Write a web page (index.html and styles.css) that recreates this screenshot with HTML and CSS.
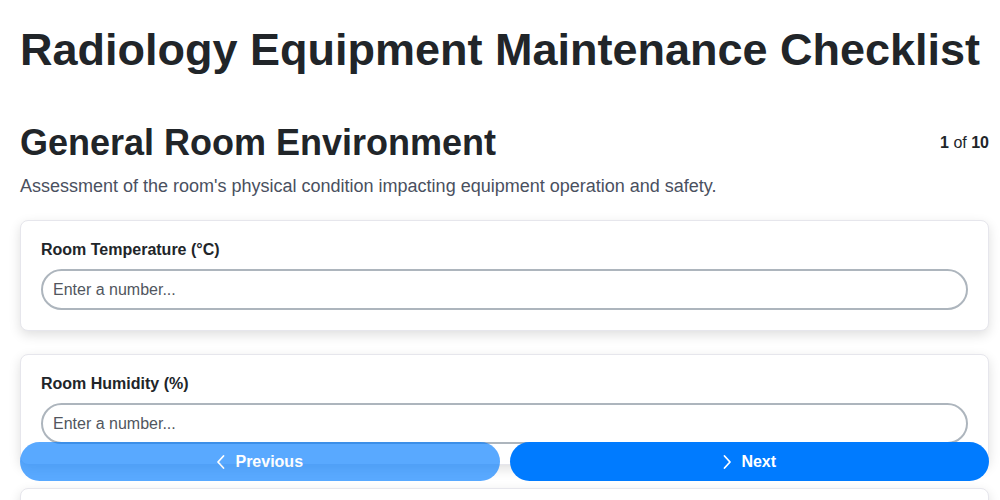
FILE: index.html
```html
<!DOCTYPE html>
<html lang="en">
<head>
<meta charset="utf-8">
<title>Radiology Equipment Maintenance Checklist</title>
<link rel="stylesheet" href="styles.css">
</head>
<body>
<header class="header">
  <h1 class="title">Radiology Equipment Maintenance Checklist</h1>
</header>
<main class="page">
  <section class="step">
    <div class="step-head">
      <h2 class="step-title">General Room Environment</h2>
      <div class="step-count"><b>1</b> of <b>10</b></div>
    </div>
    <p class="step-desc">Assessment of the room's physical condition impacting equipment operation and safety.</p>

    <div class="card">
      <label class="field-label" for="temp">Room Temperature (°C)</label>
      <input class="field-input" id="temp" type="number" placeholder="Enter a number...">
    </div>
    <div class="card">
      <label class="field-label" for="hum">Room Humidity (%)</label>
      <input class="field-input" id="hum" type="number" placeholder="Enter a number...">
    </div>
    <div class="card">
      <label class="field-label" for="light">Lighting Adequate</label>
      <input class="field-input" id="light" type="text" placeholder="Enter a value...">
    </div>
  </section>
</main>
<nav class="nav">
  <button class="btn btn-prev" type="button">
    <svg class="chev" width="10" height="16" viewBox="0 0 10 16"><path d="M7.5 2 L2 8 L7.5 14" fill="none" stroke="#fff" stroke-width="1.8" stroke-linecap="round" stroke-linejoin="round"/></svg>
    <span>Previous</span>
  </button>
  <button class="btn btn-next" type="button">
    <svg class="chev" width="10" height="16" viewBox="0 0 10 16"><path d="M2.5 2 L8 8 L2.5 14" fill="none" stroke="#fff" stroke-width="1.8" stroke-linecap="round" stroke-linejoin="round"/></svg>
    <span>Next</span>
  </button>
</nav>
</body>
</html>
```
FILE: styles.css
```css
* { box-sizing: border-box; }
html, body { margin: 0; padding: 0; background: #fff; }
body {
  font-family: "Liberation Sans", Arial, sans-serif;
  color: #212529;
  overflow: hidden;
}
.header {
  padding-top: 22px;
}
.title {
  margin: 0;
  font-size: 45px;
  line-height: 56px;
  font-weight: 700;
  text-align: center;
  white-space: nowrap;
  color: #212529;
}
.page {
  padding: 0 11px 80px 20px;
}
.step-head {
  display: flex;
  justify-content: space-between;
  align-items: center;
  margin-top: 43px;
}
.step-title {
  margin: 0;
  font-size: 36px;
  line-height: 44px;
  font-weight: 700;
}
.step-count {
  font-size: 16px;
  color: #212529;
}
.step-desc {
  margin: 10px 0 23px 0;
  font-size: 18px;
  line-height: 22px;
  color: #4a5060;
}
.card {
  background: #fff;
  border: 1px solid #e6e6ec;
  border-radius: 8px;
  padding: 20px;
  margin-bottom: 23px;
  box-shadow: 0 4px 12px rgba(0, 0, 0, 0.13);
}
.field-label {
  display: block;
  font-size: 16px;
  line-height: 18px;
  font-weight: 700;
  color: #212529;
  margin-bottom: 10px;
}
.field-input {
  display: block;
  width: 100%;
  height: 41px;
  border: 2px solid #adb5bd;
  border-radius: 21px;
  padding: 0 10px;
  font-family: "Liberation Sans", Arial, sans-serif;
  font-size: 16px;
  color: #212529;
  background: #fff;
  outline: none;
  -moz-appearance: textfield;
}
.field-input::-webkit-outer-spin-button,
.field-input::-webkit-inner-spin-button { -webkit-appearance: none; margin: 0; }
.field-input::placeholder { color: #51565e; opacity: 1; }
.nav {
  position: fixed;
  left: 20px;
  right: 11px;
  bottom: 19px;
  display: flex;
  gap: 10px;
}
.btn {
  flex: 1 1 0;
  height: 39px;
  border: none;
  border-radius: 20px;
  display: flex;
  align-items: center;
  justify-content: center;
  gap: 9px;
  font-family: "Liberation Sans", Arial, sans-serif;
  font-size: 16px;
  font-weight: 700;
  color: #fff;
  background: #007bff;
  cursor: pointer;
}
.btn-prev { opacity: 0.65; }
.chev { display: block; }
```
